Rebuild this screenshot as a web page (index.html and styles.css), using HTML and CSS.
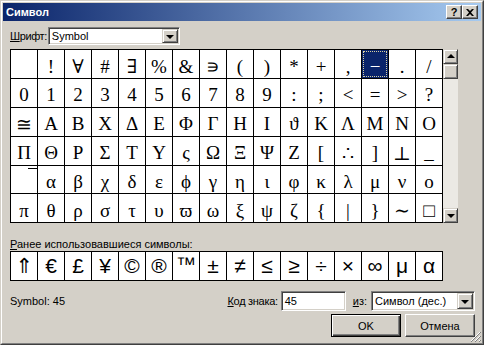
FILE: index.html
```html
<!DOCTYPE html>
<html lang="ru">
<head>
    <meta charset="UTF-8">
    <title>Символ</title>
    <link rel="stylesheet" href="styles.css">
</head>
<body>
    <div class="window">
        <div class="frame">
            <div class="titlebar">
                <span class="title">Символ</span>
                <div class="cap-btns">
                    <div class="cap">?</div>
                    <div class="cap">
                        <svg width="8" height="7" viewBox="0 0 8 7"><path d="M0 0h2l2 2 2-2h2L5 3.5 8 7H6L4 5 2 7H0l3-3.5z" fill="#000"/></svg>
                    </div>
                </div>
            </div>

            <div class="content">
                <div class="font-row">
                    <span class="label font-label"><u>Ш</u>рифт:</span>
                    <div class="combo font-combo">
                        <span class="combo-text">Symbol</span>
                        <span class="drop"><i class="tri"></i></span>
                    </div>
                </div>

                <div class="chart">
                    <div class="grid">
                        <div class="cell"></div><div class="cell">!</div><div class="cell">∀</div><div class="cell">#</div>
                        <div class="cell">∃</div><div class="cell">%</div><div class="cell">&amp;</div><div class="cell">∍</div>
                        <div class="cell">(</div><div class="cell">)</div><div class="cell">*</div><div class="cell">+</div>
                        <div class="cell">,</div><div class="cell selected">−</div><div class="cell">.</div><div class="cell">/</div>

                        <div class="cell">0</div><div class="cell">1</div><div class="cell">2</div><div class="cell">3</div>
                        <div class="cell">4</div><div class="cell">5</div><div class="cell">6</div><div class="cell">7</div>
                        <div class="cell">8</div><div class="cell">9</div><div class="cell">:</div><div class="cell">;</div>
                        <div class="cell">&lt;</div><div class="cell">=</div><div class="cell">&gt;</div><div class="cell">?</div>

                        <div class="cell">≅</div><div class="cell">Α</div><div class="cell">Β</div><div class="cell">Χ</div>
                        <div class="cell">Δ</div><div class="cell">Ε</div><div class="cell">Φ</div><div class="cell">Γ</div>
                        <div class="cell">Η</div><div class="cell">Ι</div><div class="cell">ϑ</div><div class="cell">Κ</div>
                        <div class="cell">Λ</div><div class="cell">Μ</div><div class="cell">Ν</div><div class="cell">Ο</div>

                        <div class="cell">Π</div><div class="cell">Θ</div><div class="cell">Ρ</div><div class="cell">Σ</div>
                        <div class="cell">Τ</div><div class="cell">Υ</div><div class="cell">ς</div><div class="cell">Ω</div>
                        <div class="cell">Ξ</div><div class="cell">Ψ</div><div class="cell">Ζ</div><div class="cell">[</div>
                        <div class="cell">∴</div><div class="cell">]</div><div class="cell">⊥</div><div class="cell">_</div>

                        <div class="cell ext-cell"><span class="ext"></span></div><div class="cell">α</div><div class="cell">β</div><div class="cell">χ</div>
                        <div class="cell">δ</div><div class="cell">ε</div><div class="cell">ϕ</div><div class="cell">γ</div>
                        <div class="cell">η</div><div class="cell">ι</div><div class="cell">φ</div><div class="cell">κ</div>
                        <div class="cell">λ</div><div class="cell">μ</div><div class="cell">ν</div><div class="cell">ο</div>

                        <div class="cell">π</div><div class="cell">θ</div><div class="cell">ρ</div><div class="cell">σ</div>
                        <div class="cell">τ</div><div class="cell">υ</div><div class="cell">ϖ</div><div class="cell">ω</div>
                        <div class="cell">ξ</div><div class="cell">ψ</div><div class="cell">ζ</div><div class="cell">{</div>
                        <div class="cell">|</div><div class="cell">}</div><div class="cell">∼</div><div class="cell">□</div>
                    </div>

                    <div class="scrollbar">
                        <div class="sb-btn"><i class="tri up"></i></div>
                        <div class="thumb"></div>
                        <div class="track"></div>
                        <div class="sb-btn"><i class="tri"></i></div>
                    </div>
                </div>

                <div class="recent-label"><u>Р</u>анее использовавшиеся символы:</div>
                <div class="recent">
                    <div class="cell">⇑</div><div class="cell">€</div><div class="cell">£</div><div class="cell">¥</div>
                    <div class="cell">©</div><div class="cell">®</div><div class="cell tm">™</div><div class="cell">±</div>
                    <div class="cell">≠</div><div class="cell">≤</div><div class="cell">≥</div><div class="cell">÷</div>
                    <div class="cell">×</div><div class="cell">∞</div><div class="cell">μ</div><div class="cell">α</div>
                </div>

                <div class="info-row">
                    <span class="status">Symbol: 45</span>
                    <span class="label code-label"><u>К</u>од знака:</span>
                    <div class="field">45</div>
                    <span class="label from-label"><u>и</u>з:</span>
                    <div class="combo from-combo">
                        <span class="combo-text">Символ (дес.)</span>
                        <span class="drop"><i class="tri"></i></span>
                    </div>
                </div>

                <div class="buttons">
                    <div class="btn default">OK</div>
                    <div class="btn">Отмена</div>
                </div>
            </div>

            <svg class="grip" width="11" height="11" viewBox="0 0 11 11">
                <path d="M10 1L1 10M10 5L5 10M10 9L9 10" stroke="#fff" stroke-width="1"/>
                <path d="M11 1L1 11M11 5L5 11M11 9L9 11" stroke="#808080" stroke-width="1"/>
            </svg>
        </div>
    </div>
</body>
</html>
```

FILE: styles.css
```css
body {
    margin: 0;
    background: #d4d0c8;
    font-family: "Liberation Sans", Arial, sans-serif;
    font-size: 11px;
    color: #000;
}

.window {
    width: 484px;
    height: 345px;
    box-sizing: border-box;
    border: 1px solid;
    border-color: #d4d0c8 #404040 #404040 #d4d0c8;
}

.frame {
    position: relative;
    height: 100%;
    box-sizing: border-box;
    border: 1px solid;
    border-color: #fff #808080 #808080 #fff;
    padding: 1px;
    display: flex;
    flex-direction: column;
}

/* Title bar */
.titlebar {
    height: 18px;
    flex: none;
    background: linear-gradient(to right, #0a246a, #a6caf0);
    display: flex;
    align-items: center;
    justify-content: space-between;
    padding: 0 3px 0 3px;
    color: #fff;
    font-weight: bold;
}

.cap-btns {
    display: flex;
}

.cap {
    width: 16px;
    height: 14px;
    box-sizing: border-box;
    background: #d4d0c8;
    border: 1px solid;
    border-color: #fff #404040 #404040 #fff;
    box-shadow: inset -1px -1px #808080;
    display: flex;
    align-items: center;
    justify-content: center;
    color: #000;
    font-size: 11px;
    font-weight: bold;
}

/* Dialog content */
.content {
    flex: 1;
    display: flex;
    flex-direction: column;
    padding: 6px 6px 0 7px;
}

.font-row {
    display: flex;
    align-items: center;
    gap: 1px;
}

.font-label {
    letter-spacing: -0.4px;
}

.combo {
    height: 18px;
    box-sizing: border-box;
    border: 1px solid;
    border-color: #808080 #fff #fff #808080;
    box-shadow: inset 1px 1px #404040, inset -1px -1px #d4d0c8;
    background: #fff;
    display: flex;
    align-items: stretch;
    padding: 1px;
}

.combo-text {
    flex: 1;
    padding-left: 2px;
    line-height: 14px;
}

.font-combo {
    width: 132px;
}

.drop {
    width: 16px;
    box-sizing: border-box;
    background: #d4d0c8;
    border: 1px solid;
    border-color: #d4d0c8 #404040 #404040 #d4d0c8;
    box-shadow: inset 1px 1px #fff, inset -1px -1px #808080;
    display: flex;
    align-items: center;
    justify-content: center;
}

.tri {
    width: 0;
    height: 0;
    border-left: 4px solid transparent;
    border-right: 4px solid transparent;
    border-top: 4px solid #000;
    margin-top: 1px;
}

.tri.up {
    border-top: none;
    border-bottom: 4px solid #000;
    margin-top: -1px;
}

/* Character chart */
.chart {
    display: flex;
    margin-top: 4px;
}

.grid {
    display: grid;
    grid-template-columns: repeat(16, 26px);
    grid-template-rows: repeat(6, 1fr);
    gap: 1px;
    height: 174px;
    box-sizing: border-box;
    background: #000;
    border: 1px solid #000;
}

.cell {
    background: #fff;
    display: flex;
    align-items: center;
    justify-content: center;
    box-sizing: border-box;
}

.grid .cell {
    font-family: "Liberation Serif", "DejaVu Serif", serif;
    font-size: 19px;
    padding-top: 5px;
}

.grid .cell.selected {
    background: #0a246a;
    color: #fff;
    outline: 1px dotted #d8d0a0;
    outline-offset: -2px;
}

.ext-cell {
    justify-content: flex-end;
    align-items: flex-start;
}

.grid .ext-cell {
    padding-top: 2px;
}

.ext {
    width: 9px;
    height: 1px;
    background: #000;
}

.scrollbar {
    width: 15px;
    height: 174px;
    display: flex;
    flex-direction: column;
    background: #ebe9e4;
}

.sb-btn,
.thumb {
    height: 15px;
    flex: none;
    box-sizing: border-box;
    background: #d4d0c8;
    border: 1px solid;
    border-color: #d4d0c8 #404040 #404040 #d4d0c8;
    box-shadow: inset 1px 1px #fff, inset -1px -1px #808080;
    display: flex;
    align-items: center;
    justify-content: center;
}

.track {
    flex: 1;
}

/* Recently used */
.recent-label {
    margin-top: 15px;
    line-height: 13px;
    height: 13px;
}

.recent {
    display: grid;
    grid-template-columns: repeat(16, 26px);
    grid-template-rows: 28px;
    gap: 1px;
    width: max-content;
    background: #000;
    border: 1px solid #000;
}

.recent .cell {
    font-family: "Liberation Sans", "DejaVu Sans", sans-serif;
    font-size: 21px;
}

.recent .cell.tm {
    align-items: flex-start;
    font-size: 20px;
    padding-top: 1px;
}

/* Code row */
.info-row {
    display: flex;
    align-items: center;
    margin-top: 10px;
    height: 20px;
}

.status {
    flex: 1;
}

.code-label {
    margin-right: 3px;
    letter-spacing: -0.3px;
}

.field {
    width: 65px;
    height: 20px;
    box-sizing: border-box;
    border: 1px solid;
    border-color: #808080 #fff #fff #808080;
    box-shadow: inset 1px 1px #404040, inset -1px -1px #d4d0c8;
    background: #fff;
    padding: 3px 0 0 3px;
}

.from-label {
    margin: 0 4px 0 7px;
}

.from-combo {
    width: 104px;
    height: 20px;
}

.from-combo .combo-text {
    line-height: 16px;
}

/* Buttons */
.buttons {
    display: flex;
    justify-content: flex-end;
    gap: 4px;
    margin-top: 3px;
}

.btn {
    width: 70px;
    height: 23px;
    box-sizing: border-box;
    background: #d4d0c8;
    border: 1px solid;
    border-color: #fff #404040 #404040 #fff;
    box-shadow: inset -1px -1px #808080;
    display: flex;
    align-items: center;
    justify-content: center;
}

.btn.default {
    border-color: #000;
    box-shadow: inset 1px 1px #fff, inset -1px -1px #404040, inset -2px -2px #808080;
}

.grip {
    position: absolute;
    right: 1px;
    bottom: 1px;
}
```
